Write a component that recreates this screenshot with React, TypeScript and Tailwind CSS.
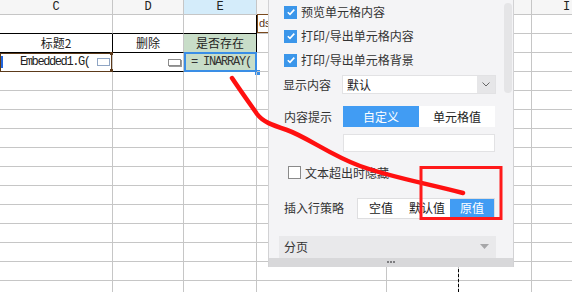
import type { ReactNode } from 'react';

// column widths C..I, written out so Tailwind picks them up
const COLS = ['w-[113px]', 'w-[71px]', 'w-[73px]', 'w-[130px]', 'w-[72px]', 'w-[73px]', 'w-[70px]'];
// F, G, H sit under the floating panel, so their letters never show
const LETTERS = ['C', 'D', 'E', '', '', '', 'I'];
const CJK = "font-['Noto_Sans_CJK_SC',sans-serif]";
const MONO = "font-['Liberation_Mono',monospace]";

function Cell({ col, className = '', children }: { col: number; className?: string; children?: ReactNode }) {
  return (
    <div
      className={`relative flex h-[19px] shrink-0 items-center border-r border-b border-[#c6c6c6] ${COLS[col]} ${className}`}
    >
      {children}
    </div>
  );
}

function Check({ on }: { on: boolean }) {
  if (!on) {
    return <span className="h-[13px] w-[13px] shrink-0 border border-[#8a8a8a] bg-white" />;
  }
  return (
    <span className="flex h-[13px] w-[13px] shrink-0 items-center justify-center bg-[#3b96ea]">
      <svg width="10" height="10" viewBox="0 0 10 10">
        <path d="M1.8 5.2 L4 7.4 L8.3 2.6" fill="none" stroke="#fff" strokeWidth="1.6" />
      </svg>
    </span>
  );
}

function Sheet() {
  const empty = Array.from({ length: 12 });
  return (
    <div className={`flex flex-col text-[12px] text-[#222] ${CJK}`}>
      {/* column letters */}
      <div className="flex h-[15px]">
        {LETTERS.map((l, i) => (
          <div
            key={i}
            className={`flex h-[15px] shrink-0 items-center justify-center border-r border-b border-[#c6c6c6] ${COLS[i]} ${
              i === 2 ? 'bg-[#d4ecfa]' : 'bg-[#f6f6f6]'
            } ${MONO} text-[12px] text-[#222]`}
          >
            {l}
          </div>
        ))}
      </div>

      {/* row 1 */}
      <div className="flex">
        <Cell col={0} className="border-b-black" />
        <Cell col={1} className="border-b-black" />
        <Cell col={2} className="border-b-black border-r-black" />
        <Cell col={3}>
          <div className="-mt-px flex h-[19px] w-[24px] items-center border border-[#7a4a1e] pl-px font-['Liberation_Sans',sans-serif] text-[11px] text-[#5a3414]">
            ds
          </div>
        </Cell>
        <Cell col={4} />
        <Cell col={5} />
        <Cell col={6} />
      </div>

      {/* row 2 */}
      <div className="flex">
        <Cell col={0} className="justify-center border-r-black border-b-black">
          标题2
        </Cell>
        <Cell col={1} className="justify-center border-b-black">
          删除
        </Cell>
        <Cell col={2} className="justify-center border-r-black bg-[#c8ddc8]">
          是否存在
        </Cell>
        <Cell col={3} />
        <Cell col={4} />
        <Cell col={5} />
        <Cell col={6} />
      </div>

      {/* row 3 */}
      <div className="flex">
        <Cell col={0} className="border-b-black">
          <div className="flex h-[19px] w-[112px] items-center border border-[#5c3a1a]">
            <span className="h-[12px] w-[2px] bg-[#2266dd]" />
            <span className={`ml-[17px] ${MONO} text-[12px] tracking-[-1.4px] text-[#222]`}>Embedded1.G(</span>
            <span className="ml-[7px] h-[8px] w-[13px] border border-[#8fa5c4] bg-white" />
            <span className="absolute top-[-1px] right-[-1px] h-[3px] w-[3px] bg-[#5c3a1a]" />
            <span className="absolute right-[-1px] bottom-[-1px] h-[3px] w-[3px] bg-[#5c3a1a]" />
          </div>
        </Cell>
        <Cell col={1} className="justify-end border-b-black pr-[2px]">
          <span className="h-[7px] w-[13px] border border-[#8c8c8c] bg-white shadow-[1px_1px_0_#9a9a9a]" />
        </Cell>
        {/* selected cell */}
        <div className="relative -mt-px flex h-[20px] w-[73px] shrink-0 items-center bg-[#c8ddc8] pl-[7px] outline-[2.5px] outline-[#3a8ee6] -outline-offset-2">
          <span className={`${MONO} text-[12px] tracking-[-1.2px] text-[#333]`}>= INARRAY(</span>
          <span className="absolute right-[-3px] bottom-[-3px] h-[5px] w-[5px] bg-[#3a8ee6]" />
        </div>
        <Cell col={3} />
        <Cell col={4} />
        <Cell col={5} />
        <Cell col={6} />
      </div>

      {empty.map((_, r) => (
        <div key={r} className="flex">
          {COLS.map((_, c) => (
            <Cell key={c} col={c} />
          ))}
        </div>
      ))}
    </div>
  );
}

function Panel() {
  return (
    <div
      className={`absolute top-0 left-[268px] flex h-[267px] w-[246px] flex-col border-x border-[#d2d2d4] bg-[#f4f4f6] text-[12px] text-[#333] ${CJK}`}
    >
      <div className="absolute top-[3px] left-[235px] h-[90px] w-[8px] rounded-full bg-[#e5e5e7]" />

      <div className="flex flex-col pl-[15px]">
        {['预览单元格内容', '打印/导出单元格内容', '打印/导出单元格背景'].map((t) => (
          <div key={t} className="flex h-[24px] items-center gap-[4px]">
            <Check on />
            <span>{t}</span>
          </div>
        ))}
      </div>

      <div className="mt-[3px] flex items-center pl-[14px]">
        <span className="w-[59px]">显示内容</span>
        <div className="flex h-[19px] w-[154px] items-center border border-[#e2e2e4] bg-white">
          <span className="flex-1 pl-[4px] text-[#222]">默认</span>
          <span className="flex h-full w-[18px] items-center justify-center bg-[#e6e6e8]">
            <svg width="8" height="5" viewBox="0 0 8 5">
              <path d="M0.5 0.5 L4 4 L7.5 0.5" fill="none" stroke="#666" strokeWidth="1" />
            </svg>
          </span>
        </div>
      </div>

      <div className="mt-[12px] flex items-center pl-[15px]">
        <span className="w-[59px]">内容提示</span>
        <div className="flex h-[21px] w-[152px] bg-white">
          <span className="flex w-[76px] items-center justify-center bg-[#419cf3] text-white">自定义</span>
          <span className="flex w-[76px] items-center justify-center text-[#222]">单元格值</span>
        </div>
      </div>

      <div className="mt-[7px] ml-[74px] h-[19px] w-[152px] border border-[#e2e2e4] bg-white" />

      <div className="mt-[12px] flex items-center gap-[4px] pl-[19px]">
        <Check on={false} />
        <span>文本超出时隐藏</span>
      </div>

      <div className="mt-[16px] flex items-center pl-[15px]">
        <span className="w-[73px]">插入行策略</span>
        <div className="flex h-[21px] w-[138px] border border-[#dedee0] bg-white text-[#222]">
          <span className="flex w-[46px] items-center justify-center">空值</span>
          <span className="flex w-[46px] items-center justify-center">默认值</span>
          <span className="flex flex-1 items-center justify-center bg-[#419cf3] text-white">原值</span>
        </div>
      </div>

      <div className="mt-[17px] ml-[10px] flex h-[23px] w-[217px] items-center justify-between bg-[#e9e9eb] pr-[7px] pl-[5px]">
        <span>分页</span>
        <svg width="9" height="5" viewBox="0 0 9 5">
          <path d="M0 0 L9 0 L4.5 5 Z" fill="#a6a6a8" />
        </svg>
      </div>

      <div className="mt-auto flex h-[10px] items-center justify-center gap-[1px] bg-[#d8d8da]">
        <span className="h-[2px] w-[2px] bg-[#7d7d80]" />
        <span className="h-[2px] w-[2px] bg-[#7d7d80]" />
        <span className="h-[2px] w-[2px] bg-[#7d7d80]" />
      </div>
    </div>
  );
}

export default function App() {
  return (
    <div className="relative h-[292px] w-[572px] overflow-hidden bg-white">
      <Sheet />
      {/* page break marker */}
      <div className="absolute top-[15px] bottom-0 left-[458px] border-l border-dashed border-black" />
      <Panel />
      {/* red annotation drawn over the screenshot */}
      <svg className="pointer-events-none absolute inset-0" width="572" height="292" viewBox="0 0 572 292">
        <path
          d="M232 78 C 240 90, 250 104, 257 114 C 263 122, 272 125, 287 130 C 307 137, 330 155, 360 166 C 390 177, 425 183, 463 193"
          fill="none"
          stroke="#ff1010"
          strokeWidth="4.5"
          strokeLinecap="round"
        />
        <rect x="421" y="167.5" width="80" height="51" fill="none" stroke="#ff1a1a" strokeWidth="3" />
      </svg>
    </div>
  );
}
